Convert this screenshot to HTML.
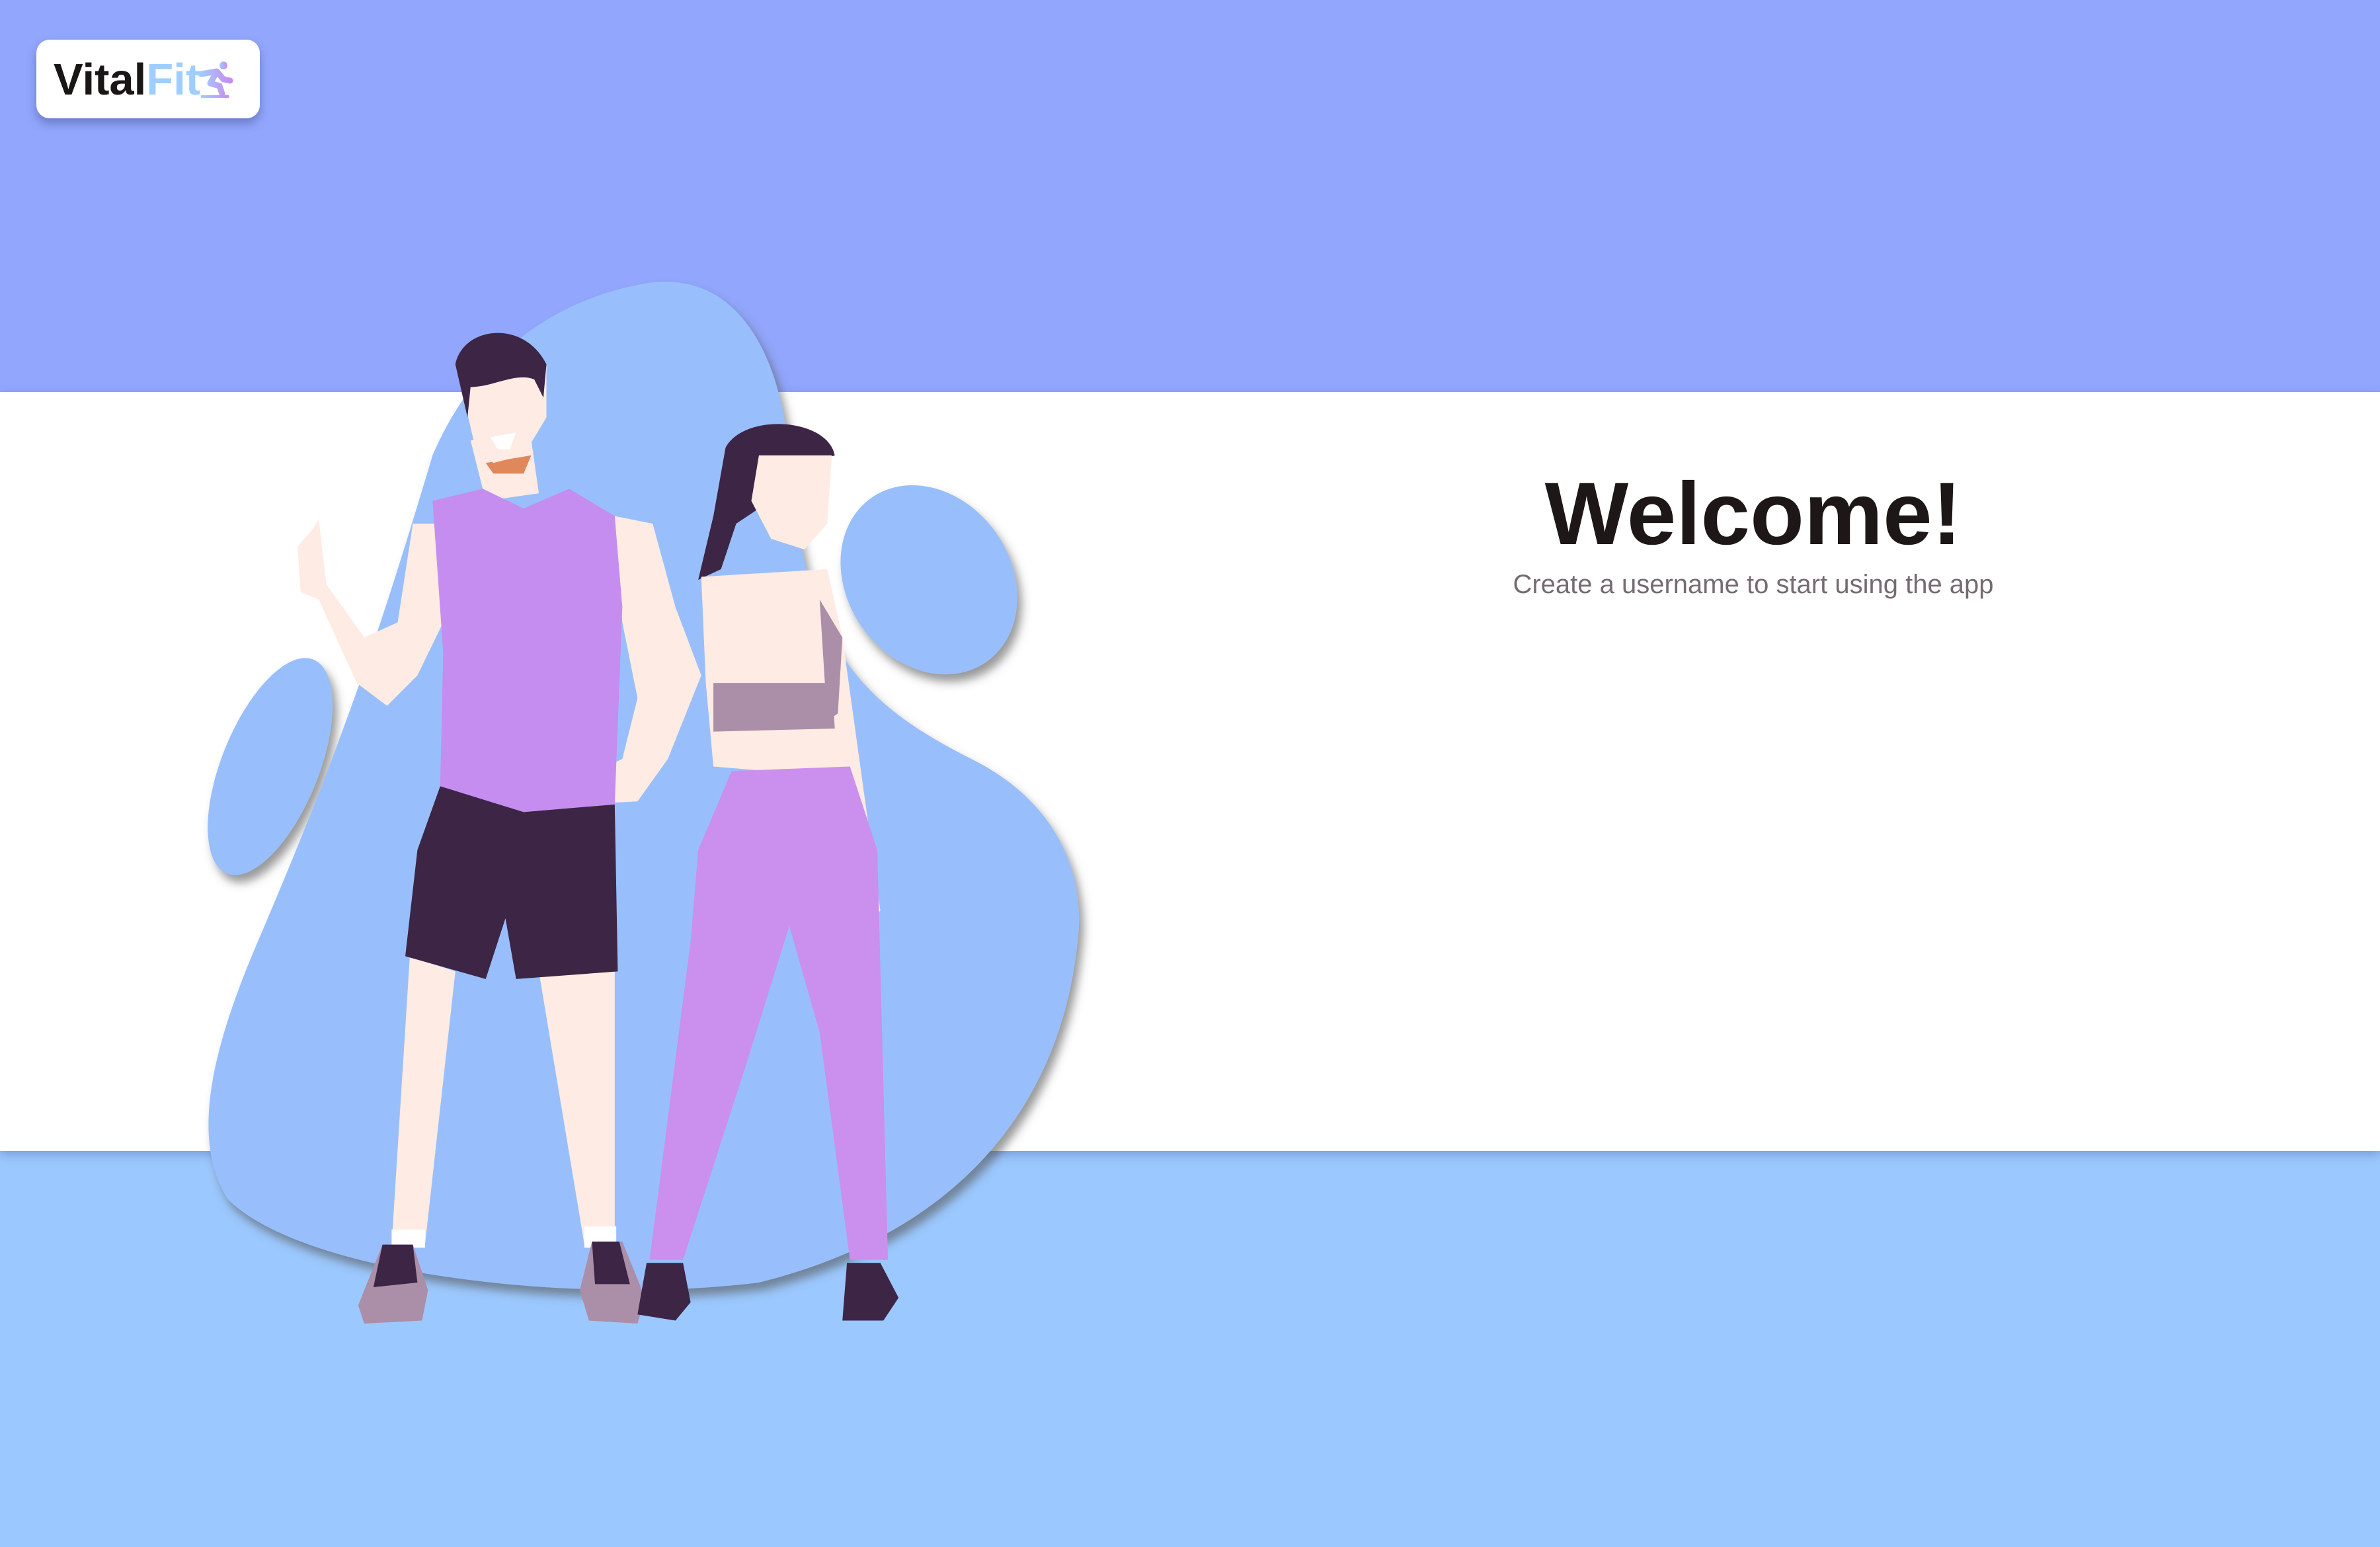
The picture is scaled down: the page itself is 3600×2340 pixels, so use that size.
<!DOCTYPE html>
<html><head><meta charset="utf-8"><style>
html,body{margin:0;padding:0}
body{width:3600px;height:2340px;position:relative;overflow:hidden;font-family:"Liberation Sans",sans-serif;background:#9bc8fe}
.top{position:absolute;left:0;top:0;width:3600px;height:593px;background:#91a6fc}
.mid{position:absolute;left:0;top:593px;width:3600px;height:1148px;background:#fff;box-shadow:0 6px 14px rgba(60,80,160,.35)}
.logo{position:absolute;left:55px;top:60px;width:338px;height:119px;background:#fff;border-radius:20px;box-shadow:0 8px 14px rgba(60,70,140,.45)}
.logo span.t{position:absolute;left:26px;top:22px;font-size:67px;font-weight:bold;letter-spacing:0px;color:#1b1616}
.logo span.f{color:#9fcdfd}
h1{position:absolute;left:0;width:5304px;top:704px;margin:0;text-align:center;font-size:134px;font-weight:bold;color:#1d1717;line-height:1.1}
p.s{position:absolute;left:0;width:5304px;top:862px;margin:0;text-align:center;font-size:40px;color:#756b70}
svg.ill{position:absolute;left:0;top:0}
</style></head><body>
<div class="top"></div>
<div class="mid"></div>
<div class="logo"><span class="t">Vital<span class="f">Fit</span></span>
<svg style="position:absolute;left:243px;top:30px" width="56" height="60" viewBox="0 0 56 60">
<defs><linearGradient id="g" x1="0" x2="1"><stop offset="0" stop-color="#9fcdfd"/><stop offset="1" stop-color="#c88cf0"/></linearGradient></defs>
<circle cx="40" cy="9" r="6" fill="url(#g)"/>
<path d="M6 22 L30 18 L40 30 L50 32 M30 18 L20 36 L34 40 L38 52" stroke="url(#g)" stroke-width="9" fill="none" stroke-linecap="round" stroke-linejoin="round"/>
<rect x="6" y="54" width="42" height="4" fill="url(#g)"/>
</svg></div>
<h1>Welcome!</h1>
<p class="s">Create a username to start using the app</p>
<svg class="ill" width="3600" height="2340" viewBox="0 0 1568 1019.2" preserveAspectRatio="none">
<defs><filter id="sh" x="-20%" y="-20%" width="140%" height="140%"><feDropShadow dx="3" dy="5" stdDeviation="3" flood-color="#555" flood-opacity="0.6"/></filter></defs>
<g filter="url(#sh)" fill="#98bffb">
<path d="M430 186 C490 180 515 240 520 300 C530 420 560 460 640 500 C700 530 715 580 710 620 C700 720 640 810 500 845 C380 860 200 840 150 790 C125 750 140 690 170 620 C230 480 255 400 285 300 C315 230 370 195 430 186 Z"/>
<ellipse cx="178" cy="505" rx="32" ry="76" transform="rotate(22 178 505)"/>
<ellipse cx="612" cy="382" rx="54" ry="66" transform="rotate(-35 612 382)"/>
</g>
<!-- man -->
<g>
<path d="M270 630 L300 640 L280 820 L258 820 Z M355 640 L405 640 L405 820 L385 820 Z" fill="#feebe3"/>
<path d="M258 810 L280 810 L280 822 L258 822Z M385 808 L406 808 L406 822 L385 822Z" fill="#fff"/>
<path d="M252 820 L272 820 L282 850 L278 870 L240 872 L236 860 Z M390 818 L410 818 L425 855 L420 872 L388 870 L382 850 Z" fill="#ab8ea8"/>
<path d="M252 820 L272 820 L275 845 L246 848Z M390 818 L408 818 L415 846 L392 846Z" fill="#3c2545"/>
<path d="M290 518 L405 530 L407 640 L340 645 L333 605 L320 645 L267 630 L275 560 Z" fill="#3c2545"/>
<path d="M405 340 L430 345 L445 400 L462 445 L440 500 L420 528 L380 530 L378 515 L410 500 L420 460 L410 410 Z" fill="#feebe3"/>
<path d="M272 345 L292 345 L292 410 L275 445 L255 465 L235 450 L210 395 L198 390 L196 360 L205 350 L210 342 L215 385 L240 420 L262 410 Z" fill="#feebe3"/>
<path d="M310 290 L350 290 L355 325 L320 330 Z" fill="#feebe3"/>
<path d="M320 305 L350 300 L345 312 L325 312Z" fill="#e0875c"/>
<path d="M285 330 L318 322 L345 335 L375 322 L405 340 L410 400 L405 530 L345 535 L290 518 L292 430 Z" fill="#c58df0"/>
<path d="M307 235 L360 240 L360 275 L345 300 L325 305 L312 290 L305 260 Z" fill="#feebe3"/>
<path d="M300 240 C305 215 345 210 360 240 L358 262 L352 250 C340 245 325 255 310 255 L308 275 Z" fill="#3c2545"/>
<path d="M323 288 L340 285 L336 296 L328 296Z" fill="#fff"/>
</g>
<!-- woman -->
<g>
<path d="M478 295 C490 272 545 275 550 300 L520 310 L500 335 L485 345 L475 375 L460 382 L470 340 Z" fill="#3c2545"/>
<path d="M500 300 L548 300 L545 345 L530 362 L508 355 L495 330 Z" fill="#feebe3"/>
<path d="M462 380 L545 375 L555 420 L580 600 L565 615 L555 570 L530 510 L470 505 L465 450 Z" fill="#feebe3"/>
<path d="M470 450 L548 450 L550 480 L470 482 Z" fill="#ab8ea8"/>
<path d="M540 395 L555 420 L552 470 L545 475Z" fill="#ab8ea8"/>
<path d="M482 508 L560 505 L578 560 L585 830 L560 830 L540 680 L520 610 L492 700 L450 830 L428 830 L455 620 L460 560 Z" fill="#cb8fed"/>
<path d="M426 832 L450 832 L455 858 L445 870 L420 866 Z M558 832 L580 832 L592 855 L582 870 L555 870 Z" fill="#3c2545"/>
</g>
</svg>
</body></html>
